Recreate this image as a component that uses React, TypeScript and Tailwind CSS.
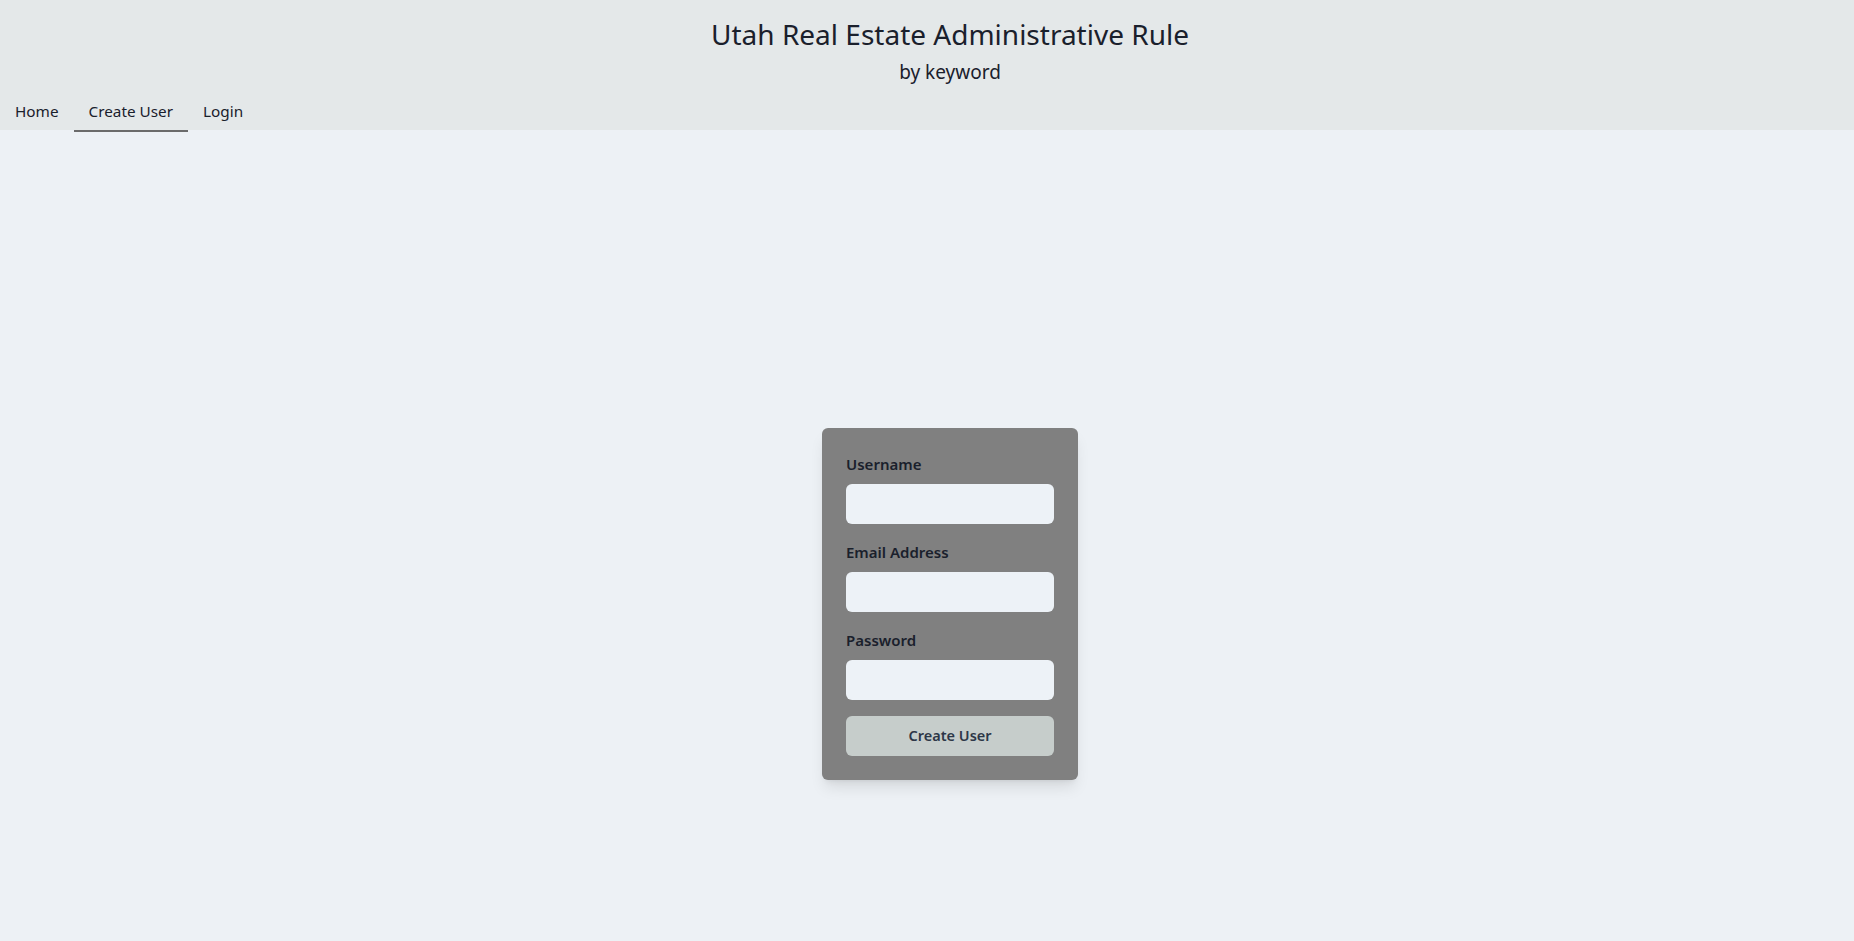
import React from "react";

export default function App() {
  const font = { fontFamily: '"Noto Sans", "Open Sans", sans-serif' };
  return (
    <div className="h-screen overflow-hidden bg-[#edf1f5] text-[#1a202c]" style={font}>
      <header className="flex h-[130px] flex-col bg-[#e4e8e9] pt-4">
        <h1 className="pl-[46px] text-center text-[28px] leading-9 font-normal">Utah Real Estate Administrative Rule</h1>
        <p className="mt-1.5 pl-[46px] text-center text-[19px] leading-7">by keyword</p>
        <nav className="relative z-10 mt-auto -mb-[2px] flex text-[15.3px] leading-6">
          <a className="border-b-2 border-transparent px-[15px] pt-2 pb-[7px]">Home</a>
          <a className="border-b-2 border-[#6b6b6b] px-[15px] pt-2 pb-[7px]">Create User</a>
          <a className="border-b-2 border-transparent px-[15px] pt-2 pb-[7px]">Login</a>
        </nav>
      </header>
      <main className="flex h-[948px] items-center justify-center pl-[46px]">
        <form className="flex w-64 flex-col rounded-md bg-[#808080] p-6 shadow-lg">
          <label className="text-[15px] leading-6 font-semibold">Username</label>
          <input className="mt-2 h-10 rounded-md bg-[#edf2f7] px-3 outline-none" />
          <label className="mt-4 text-[15px] leading-6 font-semibold">Email Address</label>
          <input className="mt-2 h-10 rounded-md bg-[#edf2f7] px-3 outline-none" />
          <label className="mt-4 text-[15px] leading-6 font-semibold">Password</label>
          <input type="password" className="mt-2 h-10 rounded-md bg-[#edf2f7] px-3 outline-none" />
          <button type="button" className="mt-4 h-10 rounded-md bg-[#c6cdcb] text-[14.5px] font-semibold text-[#2d3748]">Create User</button>
        </form>
      </main>
    </div>
  );
}
